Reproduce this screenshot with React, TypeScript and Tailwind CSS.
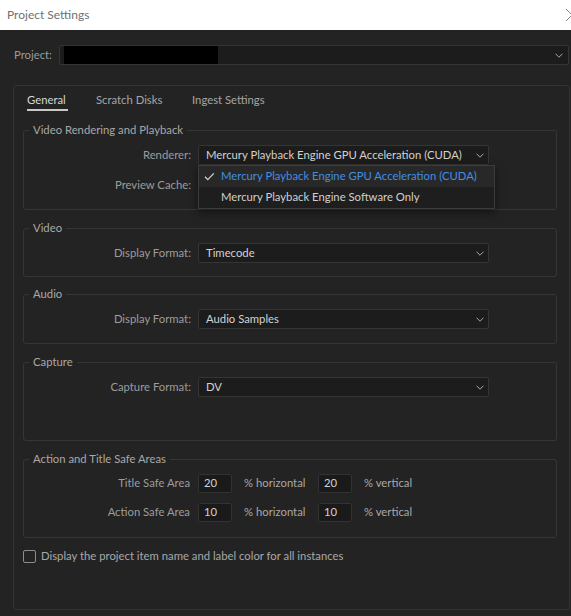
import React from "react";

function Chevron({ color = "#a8a8a8" }: { color?: string }) {
  return (
    <svg width="8" height="5" viewBox="0 0 8 5" className="shrink-0">
      <path d="M0.5 0.7 L4 4.2 L7.5 0.7" fill="none" stroke={color} strokeWidth="1" />
    </svg>
  );
}

function Select({ value, children }: { value?: string; children?: React.ReactNode }) {
  return (
    <div className="relative ml-[7px] w-[291px] h-[20px] flex items-center justify-between bg-[#1c1c1c] border border-[#353535] rounded-[2px] pl-[7px] pr-[4px] text-[#d2d2d2]">
      <span className="whitespace-nowrap">{value}</span>
      <Chevron />
      {children}
    </div>
  );
}

function Label({ text }: { text: string }) {
  return <div className="w-[167px] text-right whitespace-nowrap text-[#9c9c9c]">{text}</div>;
}

function Group({
  title,
  className = "",
  children,
}: {
  title: string;
  className?: string;
  children: React.ReactNode;
}) {
  return (
    <fieldset className={`w-[534px] border border-[#363636] rounded-[3px] pt-[7px] ${className}`}>
      <legend className="ml-[5px] px-[4px] leading-[16px] whitespace-nowrap text-[#a8a8a8]">{title}</legend>
      {children}
    </fieldset>
  );
}

function SmallInput({ value }: { value: string }) {
  return (
    <div className="w-[34px] h-[19px] flex items-center pl-[5px] bg-[#1a1a1a] border border-[#323232] rounded-[2px] text-[#d2d2d2]">
      {value}
    </div>
  );
}

function SafeRow({ label, value, className = "" }: { label: string; value: string; className?: string }) {
  return (
    <div className={`flex items-center ${className}`}>
      <div className="w-[167px] text-right whitespace-nowrap text-[#9c9c9c] pr-[1px]">{label}</div>
      <div className="ml-[7px]">
        <SmallInput value={value} />
      </div>
      <span className="ml-[12px] w-[62px] whitespace-nowrap text-[#a8a8a8]">% horizontal</span>
      <div className="ml-[12px]">
        <SmallInput value={value} />
      </div>
      <span className="ml-[12px] whitespace-nowrap text-[#a8a8a8]">% vertical</span>
    </div>
  );
}

export default function App() {
  return (
    <div className="w-[571px] h-[616px] bg-[#232323] overflow-hidden font-['Lato','Liberation_Sans',sans-serif] text-[11.3px]">
      <div className="h-[30px] bg-white flex items-center justify-between pl-[7px]">
        <span className="text-[12px] text-[#707070]">Project Settings</span>
        <svg width="8" height="14" viewBox="0 0 8 14" className="mr-[-2px]">
          <path d="M1 1 L7 7 L1 13" fill="none" stroke="#8a8a8a" strokeWidth="1" />
        </svg>
      </div>

      <div className="mt-[15px] flex items-center">
        <span className="ml-[14px] w-[45px] text-[#9c9c9c]">Project:</span>
        <div className="flex-1 mr-[2px] h-[20px] flex items-center justify-between bg-[#1c1c1c] border border-[#353535] rounded-[2px] pl-[4px] pr-[5px]">
          <div className="w-[154px] h-[18px] bg-black" />
          <Chevron />
        </div>
      </div>

      <div className="mt-[20px] ml-[13px] mr-[1px] h-[525px] border border-[#343434] rounded-[3px] pt-[6px] pl-[9px]">
        <div className="ml-[4px] flex mb-[11px]">
          <div className="w-[69px]">
            <div className="leading-[16px] text-[#d6d6d6]">General</div>
            <div className="mt-[1px] h-[2px] w-[41px] bg-[#c8c8c8]" />
          </div>
          <div className="w-[96px] leading-[16px] text-[#a6a6a6]">Scratch Disks</div>
          <div className="leading-[16px] text-[#a6a6a6]">Ingest Settings</div>
        </div>

        <Group title="Video Rendering and Playback" className="pb-[14px]">
          <div className="flex items-center relative z-10">
            <Label text="Renderer:" />
            <Select value="Mercury Playback Engine GPU Acceleration (CUDA)">
              <div className="absolute left-[-1px] top-[19px] w-[297px] bg-[#1e1e1e] border border-[#3c3c3c] shadow-[0_3px_8px_rgba(0,0,0,0.5)]">
                <div className="h-[21px] flex items-center bg-[#282828]">
                  <svg width="11" height="9" viewBox="0 0 11 9" className="ml-[5px]">
                    <path d="M1 4.8 L3.8 7.6 L9.8 1.4" fill="none" stroke="#cfcfcf" strokeWidth="1.3" />
                  </svg>
                  <span className="ml-[6px] whitespace-nowrap text-[#3f8fe4]">Mercury Playback Engine GPU Acceleration (CUDA)</span>
                </div>
                <div className="h-[21px] flex items-center pl-[22px] whitespace-nowrap text-[#d0d0d0]">
                  Mercury Playback Engine Software Only
                </div>
              </div>
            </Select>
          </div>
          <div className="mt-[10px] h-[20px] flex items-center">
            <Label text="Preview Cache:" />
          </div>
        </Group>

        <Group title="Video" className="mt-[10px] pb-[13px]">
          <div className="flex items-center">
            <Label text="Display Format:" />
            <Select value="Timecode" />
          </div>
        </Group>

        <Group title="Audio" className="mt-[9px] pb-[14px]">
          <div className="flex items-center">
            <Label text="Display Format:" />
            <Select value="Audio Samples" />
          </div>
        </Group>

        <Group title="Capture" className="mt-[10px] pb-[43px]">
          <div className="flex items-center">
            <Label text="Capture Format:" />
            <Select value="DV" />
          </div>
        </Group>

        <Group title="Action and Title Safe Areas" className="mt-[10px] pb-[15px]">
          <SafeRow label="Title Safe Area" value="20" />
          <SafeRow label="Action Safe Area" value="10" className="mt-[10px]" />
        </Group>

        <div className="mt-[11px] flex items-center h-[14px]">
          <div className="w-[13px] h-[13px] border-[1.5px] border-[#8c8c8c] rounded-[2px]" />
          <span className="ml-[5px] whitespace-nowrap text-[#a8a8a8]">Display the project item name and label color for all instances</span>
        </div>
      </div>
    </div>
  );
}
